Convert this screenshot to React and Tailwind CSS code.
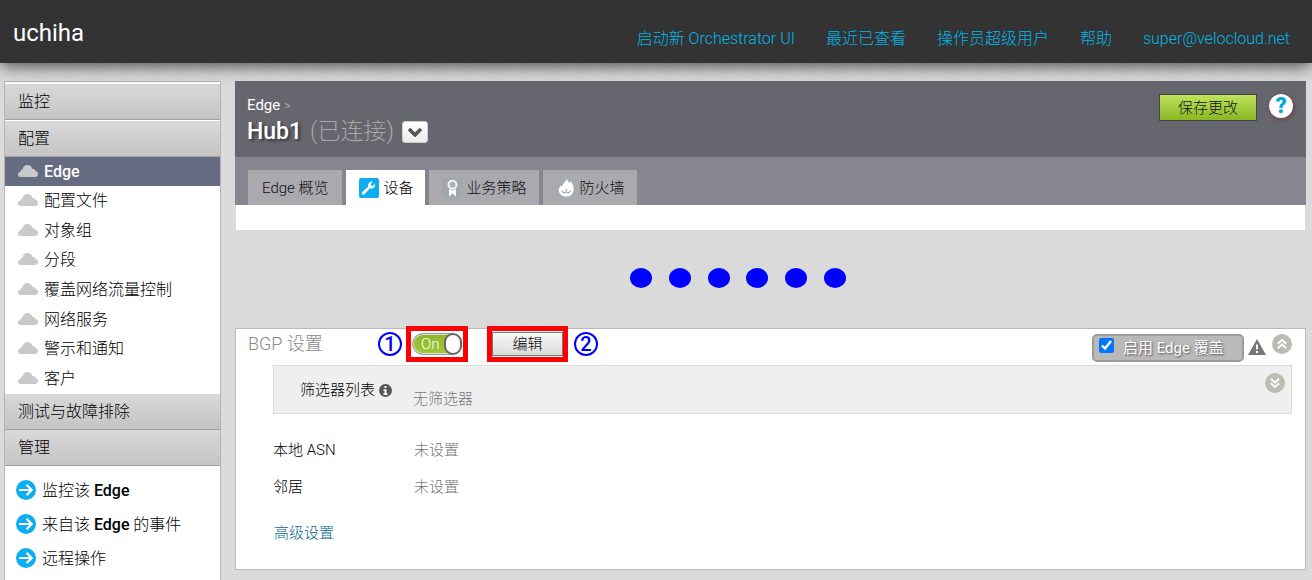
import React from "react";

const navLinks = ["启动新 Orchestrator UI", "最近已查看", "操作员超级用户", "帮助", "super@velocloud.net"];
const configItems = ["配置文件", "对象组", "分段", "覆盖网络流量控制", "网络服务", "警示和通知", "客户"];

function Cloud() {
  return (
    <svg viewBox="0 0 20 12" className="mb-[2px] h-3 w-5 shrink-0" aria-hidden="true">
      <path
        d="M3 12C1.2 12 0 10.900 0 9.400 0 7.900 1 7 2.600 6.800 2.600 5.500 3.400 4.500 4.600 4.300 5 1.800 6.800 0 9.400 0c2.500 0 4.200 1.400 4.900 3.700C16.400 4 17.300 4.900 17.500 6.100 19 6.300 20 7.400 20 9c0 1.800-1.200 3-3 3z"
        fill="#c9c9c9"
      />
    </svg>
  );
}

function ArrowBadge() {
  return (
    <svg viewBox="0 0 20 20" className="mb-[2px] h-5 w-5 shrink-0" aria-hidden="true">
      <circle cx="10" cy="10" r="10" fill="#0caeef" />
      <path d="M3 10h12.500M10.500 4.800l5.200 5.200-5.200 5.200" fill="none" stroke="#fff" strokeWidth="2.200" />
    </svg>
  );
}

function MenuHeading({ children }) {
  return (
    <h2 className="border-b border-[#a3a3a3] bg-linear-to-b from-[#d9d9d9] to-[#c4c4c4]">
      <a href="#" className="flex h-[35px] items-center px-[13px]">{children}</a>
    </h2>
  );
}

function ActionLink({ children }) {
  return (
    <li>
      <a href="#" className="flex h-[34px] items-center gap-[6px] pl-[11px]">
        <ArrowBadge />
        <span>{children}</span>
      </a>
    </li>
  );
}

function Tab({ active, icon, children }) {
  return (
    <a
      href="#"
      className={
        "flex h-[35px] items-center gap-1 text-[15px] " +
        (icon ? "pr-3 pl-[13px] " : "px-[14px] ") +
        (active ? "bg-white text-black" : "bg-[#aaa9ae] text-[#111]")
      }
    >
      {icon}
      {children}
    </a>
  );
}

function WrenchIcon() {
  return (
    <svg viewBox="0 0 20 20" className="h-5 w-5" aria-hidden="true">
      <rect width="20" height="20" rx="2" fill="#0caeef" />
      <path
        d="M15.900 5.600a3.700 3.700 0 0 1-4.900 4.600l-5.500 6a1.500 1.500 0 0 1-2.200-2.100l6-5.500a3.700 3.700 0 0 1 4.600-4.800l-2 2.200.4 1.500 1.500.4z"
        fill="#fff"
      />
    </svg>
  );
}

function RibbonIcon() {
  return (
    <svg viewBox="0 0 20 20" className="h-5 w-5" aria-hidden="true">
      <rect width="20" height="20" rx="3" fill="#a0a8aa" />
      <circle cx="10.500" cy="6.800" r="4" fill="#aab3b4" stroke="#f2f4f4" strokeWidth="2" />
      <path d="M7 11v7.500l3.500-3 3.500 3V11l-3.500 1.500z" fill="#fff" />
    </svg>
  );
}

function FlameIcon() {
  return (
    <svg viewBox="0 0 20 20" className="h-5 w-5" aria-hidden="true">
      <rect width="20" height="20" rx="3" fill="#a4acad" />
      <path
        d="M11 1c.6 2.200 1.800 3 2.600 4l1.200-1.600c2.600 3 3.200 6 2.700 9-.6 4-3.500 6.100-7.200 6.100-4.300 0-7.500-2.600-7.500-6.300 0-2.200 1-3.700 2.300-4.700l.8 1.400C6.500 5.500 9 4.500 11 1z"
        fill="#fff"
      />
      <path d="M6 12.500c0 3 8.500 3 8.500 0M10.200 11v3" fill="none" stroke="#a4acad" strokeWidth="1.200" />
    </svg>
  );
}

function RoundToggle({ label, up }) {
  return (
    <button type="button" aria-label={label} className="h-5 w-5 shrink-0">
      <svg viewBox="0 0 20 20" className="h-5 w-5" aria-hidden="true">
        <circle cx="10" cy="10" r="10" fill="#bcbcb2" />
        <path
          d={up ? "M5.800 9.800L10 6l4.200 3.800M5.800 14.300L10 10.500l4.200 3.800" : "M5.800 5.700L10 9.500l4.200-3.800M5.800 10.200L10 14l4.200-3.800"}
          fill="none"
          stroke="#fff"
          strokeWidth="2"
        />
      </svg>
    </button>
  );
}

function StepNumber({ children }) {
  return (
    <span className="flex h-6 w-6 shrink-0 items-center justify-center rounded-full border-2 border-[#0000ff] text-[20px] leading-5 font-medium text-[#0000ff]">
      {children}
    </span>
  );
}

export default function App() {
  return (
    <div className="flex min-h-screen flex-col bg-[#d9d9d9] bg-[repeating-linear-gradient(90deg,#dbdbdb_0px,#d9d9d9_13px,#dbdbdb_22px,#d9d9d9_41px,#dbdbdb_57px)] font-['Roboto','Noto_Sans_CJK_SC',sans-serif] text-[16px] leading-6 font-light text-black">
      <header className="relative flex h-[63px] items-center justify-between bg-[#333] pr-[22px] pl-[13px] shadow-[0_2px_17px_rgba(0,0,0,0.75)]">
        <h1 className="pt-[2px] text-[24px] font-normal text-white">uchiha</h1>
        <nav className="pt-[14px]">
          <ul className="flex gap-[31px] text-[#00b7ea]">
            {navLinks.map((t) => (
              <li key={t}><a href="#">{t}</a></li>
            ))}
          </ul>
        </nav>
      </header>

      <div className="flex grow items-stretch gap-[14px] pt-[18px] pr-[6px] pl-1">
        <aside className="w-[217px] shrink-0 border border-b-0 border-[#b5b5b5] bg-white pt-[2px]">
          <MenuHeading>监控</MenuHeading>
          <div className="border-t border-white">
            <MenuHeading>配置</MenuHeading>
          </div>
          <ul>
            <li>
              <a href="#" className="flex h-[29px] items-center gap-[6px] bg-[#656b80] pl-[13px] font-medium text-white">
                <Cloud />
                Edge
              </a>
            </li>
          </ul>
          <ul className="grid h-[208px] auto-rows-fr">
            {configItems.map((t) => (
              <li key={t} className="flex">
                <a href="#" className="flex grow items-center gap-[6px] pl-[13px]">
                  <Cloud />
                  {t}
                </a>
              </li>
            ))}
          </ul>
          <MenuHeading>测试与故障排除</MenuHeading>
          <MenuHeading>管理</MenuHeading>
          <ul className="pt-2">
            <ActionLink>监控该 <b className="font-medium">Edge</b></ActionLink>
            <ActionLink>来自该 <b className="font-medium">Edge</b> 的事件</ActionLink>
            <ActionLink>远程操作</ActionLink>
          </ul>
        </aside>

        <main className="min-w-0 grow pb-[10px]">
          <section>
            <div className="flex h-[76px] items-start justify-between bg-[#66666f] pt-3 pr-3 pl-3">
              <div>
                <p className="text-[15px] text-white">
                  <a href="#" className="font-normal">Edge</a> <span className="text-[13px] text-[#b5b5b5]">&gt;</span>
                </p>
                <div className="flex items-center gap-2 text-[23px] leading-7">
                  <h2 className="font-medium text-white [text-shadow:2px_2px_3px_rgba(0,0,0,0.5)]">Hub1</h2>
                  <span className="text-[#a8a7a8]">(已连接)</span>
                  <button type="button" aria-label="选择 Edge" className="flex h-[22px] w-[26px] items-center justify-center rounded-[3px] border border-[#ccc] bg-linear-to-b from-white to-[#ececec]">
                    <svg viewBox="0 0 16 10" className="h-[10px] w-4" aria-hidden="true">
                      <path d="M2 2l6 6 6-6" fill="none" stroke="#555" strokeWidth="3.500" />
                    </svg>
                  </button>
                </div>
              </div>
              <div className="flex items-center gap-3 pr-px pt-px">
                <button type="button" className="flex h-[27px] w-[98px] items-center justify-center border border-[#444] bg-linear-to-b from-[#bfe35c] to-[#89b820] text-[15px] text-[#111]">
                  保存更改
                </button>
                <button type="button" aria-label="帮助" className="mb-[3px] flex h-6 w-6 items-center justify-center rounded-full bg-white text-[22px] leading-6 font-black text-[#00a9d8] shadow-[1px_1px_4px_#733]">
                  ?
                </button>
              </div>
            </div>
            <nav className="flex h-12 items-end gap-1 bg-[#878690] pl-[13px]">
              <Tab>Edge 概览</Tab>
              <Tab active icon={<WrenchIcon />}>设备</Tab>
              <Tab icon={<RibbonIcon />}>业务策略</Tab>
              <Tab icon={<FlameIcon />}>防火墙</Tab>
            </nav>
            <div className="mx-px h-[25px] bg-white" />
          </section>

          <div className="flex h-[98px] items-center pb-[2px] pl-[395px]">
            <div className="flex w-[216px] justify-between">
              {[0, 1, 2, 3, 4, 5].map((n) => (
                <span key={n} className="h-5 w-[22px] rounded-[50%] bg-[#0000ff]" />
              ))}
            </div>
          </div>

          <section className="border border-[#b9b9b9] bg-white pr-[13px] pb-6 pl-3">
            <div className="-mt-[3px] flex items-start justify-between">
              <div className="flex items-center">
                <h3 className="w-[130px] text-[18px] text-[#888]">BGP 设置</h3>
                <StepNumber>1</StepNumber>
                <div className="ml-1 border-[5px] border-[#ff0000] bg-white px-px">
                  <button type="button" role="switch" aria-checked="true" aria-label="BGP" className="my-[2px] flex h-[22px] w-[50px] items-center justify-between rounded-full border border-[#999] bg-linear-to-b from-[#8fb52a] to-[#a0ca38] pl-2 text-[15px] leading-4 text-white shadow-[inset_0_0_0_1px_#ddd]">
                    On
                    <span className="-mr-px h-[22px] w-[18px] rounded-full border-2 border-[#666] bg-white" />
                  </button>
                </div>
                <div className="ml-[19px] border-[5px] border-[#ff0000] bg-white">
                  <button type="button" className="my-px flex h-6 w-[71px] items-center justify-center border border-[#777] bg-linear-to-b from-[#f8f8f8] to-[#dcdcdc] text-[15px]">
                    编辑
                  </button>
                </div>
                <span className="pl-[6px]"><StepNumber>2</StepNumber></span>
              </div>
              <div className="flex items-start pt-2">
                <label className="mr-1 flex h-7 w-[152px] items-center gap-[9px] rounded-[5px] border-2 border-[#9c9c9c] bg-[#b9b9b9] pl-[5px] text-[15px] font-normal text-white [text-shadow:1px_1px_2px_#555]">
                  <input type="checkbox" defaultChecked className="mb-[5px] h-[15px] w-[15px] accent-[#0075ff]" />
                  启用 Edge 覆盖
                </label>
                <svg viewBox="0 0 18 16" className="mt-[5px] mr-[6px] h-4 w-[18px]" aria-hidden="true">
                  <path d="M9 0l9 16H0z" fill="#777" />
                  <path d="M9 5.500v5M9 12v2" stroke="#fff" strokeWidth="2" />
                </svg>
                <RoundToggle label="收起" up />
              </div>
            </div>

            <div className="mt-[3px] ml-[25px] flex h-[49px] items-start border border-[#dcdcdc] bg-[#efefef] pt-[7px] pr-[6px] pl-[26px]">
              <div className="flex w-[113px] items-center gap-1 pt-[5px] text-[15px]">
                筛选器列表
                <svg viewBox="0 0 13 13" className="h-[13px] w-[13px]" aria-hidden="true">
                  <circle cx="6.500" cy="6.500" r="6.500" fill="#555" />
                  <path d="M5.500 2h2v2h-2zM4.500 5.200h3v4h1V11h-4V9.200h1V6.800h-1z" fill="#fff" />
                </svg>
              </div>
              <span className="grow pt-[14px] text-[15px] text-[#777]">无筛选器</span>
              <RoundToggle label="展开" />
            </div>

            <dl className="grid grid-cols-[141px_1fr] gap-y-[13px] pt-6 pl-[25px] text-[15px]">
              <dt>本地 ASN</dt>
              <dd className="text-[#777]">未设置</dd>
              <dt>邻居</dt>
              <dd className="text-[#777]">未设置</dd>
            </dl>
            <a href="#" className="mt-[22px] ml-[26px] inline-block text-[15px] text-[#00688f]">高级设置</a>
          </section>
        </main>
      </div>
    </div>
  );
}
